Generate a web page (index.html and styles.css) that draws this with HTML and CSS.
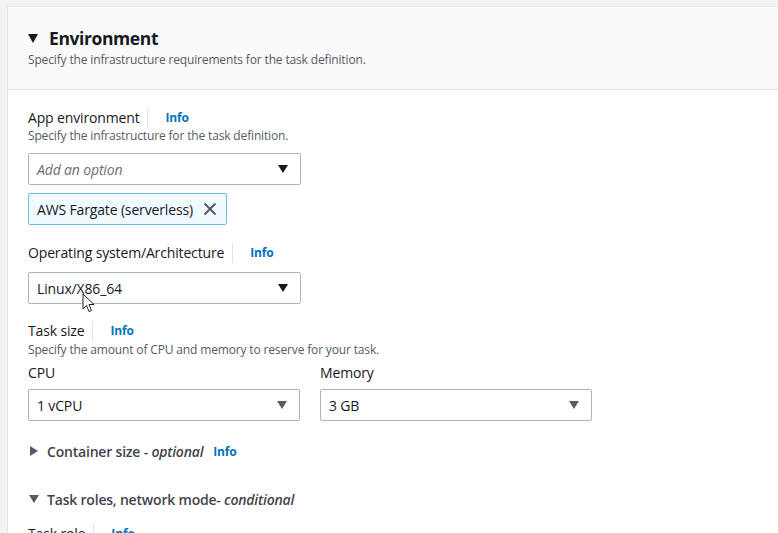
FILE: index.html
```html
<!DOCTYPE html>
<html>
<head>
<meta charset="utf-8">
<link rel="stylesheet" href="styles.css">
</head>
<body>
<div class="page">
  <section class="card">
    <header class="card-header">
      <h2 class="title"><span class="tri down"></span>Environment</h2>
      <p class="desc">Specify the infrastructure requirements for the task definition.</p>
    </header>
    <div class="card-body">
      <div class="field">
        <div class="label-row"><span class="label">App environment</span><span class="info">Info</span></div>
        <p class="hint">Specify the infrastructure for the task definition.</p>
        <div class="select wide"><span class="placeholder">Add an option</span><span class="caret"></span></div>
        <div class="token"><span>AWS Fargate (serverless)</span>
          <svg class="x" width="14" height="14" viewBox="0 0 14 14"><path d="M1.5 1.5 L12.5 12.5 M12.5 1.5 L1.5 12.5" stroke="#545b64" stroke-width="2" fill="none"/></svg>
        </div>
      </div>
      <div class="field os">
        <div class="label-row"><span class="label">Operating system/Architecture</span><span class="info">Info</span></div>
        <div class="select wide"><span class="value">Linux/X86_64</span><span class="caret"></span></div>
        <svg class="cursor" width="14" height="21" viewBox="0 0 14 21"><path d="M1 1 L1 16 L4.5 12.5 L7 18.5 L9.5 17.5 L7 11.5 L12 11.5 Z" fill="#fff" stroke="#222" stroke-width="1" stroke-linejoin="round"/></svg>
      </div>
      <div class="field task">
        <div class="label-row"><span class="label">Task size</span><span class="info">Info</span></div>
        <p class="hint">Specify the amount of CPU and memory to reserve for your task.</p>
        <div class="cols">
          <div class="col">
            <div class="sublabel">CPU</div>
            <div class="select"><span class="value">1 vCPU</span><span class="caret"></span></div>
          </div>
          <div class="col">
            <div class="sublabel">Memory</div>
            <div class="select"><span class="value">3 GB</span><span class="caret"></span></div>
          </div>
        </div>
      </div>
      <div class="expander closed-exp"><span class="tri right"></span><span class="exp-title">Container size - <em>optional</em></span><span class="info plain">Info</span></div>
      <div class="expander open-exp"><span class="tri down small"></span><span class="exp-title">Task roles, network mode- <em>conditional</em></span></div>
      <div class="label-row last"><span class="label">Task role</span><span class="info">Info</span></div>
    </div>
  </section>
</div>
</body>
</html>
```

FILE: styles.css
```css
* { box-sizing: border-box; }
html, body { margin: 0; padding: 0; }
body {
  background: #f2f3f3;
  font-family: "Open Sans", "Noto Sans", Arial, sans-serif;
  color: #16191f;
  width: 778px;
  height: 533px;
  overflow: hidden;
  letter-spacing: -0.15px;
}
.page { padding: 6px 0 0 7px; }
.card {
  background: #fff;
  border-left: 1px solid #e4e6e6;
  border-top: 1px solid #e9ebeb;
  width: 800px;
}
.card-header {
  background: #fafafa;
  border-bottom: 1px solid #e1e4e4;
  padding: 20px 20px 20px 20px;
  height: 83px;
}
.title {
  margin: 0;
  font-size: 17.5px;
  line-height: 22px;
  font-weight: 700;
  letter-spacing: -0.4px;
  display: flex;
  align-items: center;
  color: #16191f;
}
.desc {
  margin: 3px 0 0 0;
  font-size: 12px;
  line-height: 16px;
  color: #545b64;
}
.tri { display: inline-block; width: 0; height: 0; }
.tri.down {
  border-left: 5.5px solid transparent;
  border-right: 5.5px solid transparent;
  border-top: 9px solid #16191f;
  margin-right: 11px;
}
.tri.down.small {
  border-left: 5px solid transparent;
  border-right: 5px solid transparent;
  border-top: 8px solid #545b64;
  margin: 0 8px 0 1px;
}
.tri.right {
  border-top: 5px solid transparent;
  border-bottom: 5px solid transparent;
  border-left: 8px solid #545b64;
  margin: 0 9px 0 2px;
}
.card-body { padding: 18px 20px 0 20px; }
.field { position: relative; }
.label-row {
  display: flex;
  align-items: center;
  height: 20px;
  font-size: 14px;
  line-height: 20px;
}
.label {
  padding-right: 8px;
  border-right: 1px solid #dfe3e3;
  color: #16191f;
}
.info {
  margin-left: 17px;
  font-size: 12px;
  font-weight: 700;
  color: #0073bb;
}
.hint {
  margin: 0;
  font-size: 12px;
  line-height: 16px;
  color: #545b64;
}
.select {
  height: 32px;
  border: 1px solid #aab7b8;
  border-radius: 2px;
  display: flex;
  align-items: center;
  justify-content: space-between;
  padding: 0 12px 0 8px;
  font-size: 14px;
  background: #fff;
}
.select.wide { width: 273px; }
.field > .select { margin-top: 9px; }
.placeholder { font-style: italic; color: #687078; }
.value { color: #16191f; }
.caret {
  width: 0; height: 0;
  border-left: 5.5px solid transparent;
  border-right: 5.5px solid transparent;
  border-top: 8px solid #16191f;
}
.cols .caret { border-top-color: #545b64; }
.token {
  margin-top: 8px;
  display: inline-flex;
  align-items: center;
  height: 32px;
  padding: 0 9px 0 8px;
  background: #f1faff;
  border: 1px solid #6cbfd9;
  border-radius: 2px;
  font-size: 14px;
}
.token .x { margin-left: 10px; }
.field.os { margin-top: 18px; }
.field.os .select { margin-top: 9px; }
.cursor { position: absolute; left: 54px; top: 50px; }
.field.task { margin-top: 17px; }
.field.task .hint { margin-top: 1px; }
.cols { display: flex; gap: 20px; margin-top: 5px; }
.col { width: 272px; }
.sublabel { font-size: 14px; line-height: 20px; margin-bottom: 6px; }
.expander {
  display: flex;
  align-items: center;
  height: 20px;
  font-size: 14px;
  font-weight: 600;
  color: #3f454d;
  letter-spacing: -0.2px;
}
.expander em { font-weight: 600; }
.closed-exp { margin-top: 20px; }
.open-exp { margin-top: 28px; }
.info.plain { margin-left: 10px; }
.label-row.last { margin-top: 15px; }
```
